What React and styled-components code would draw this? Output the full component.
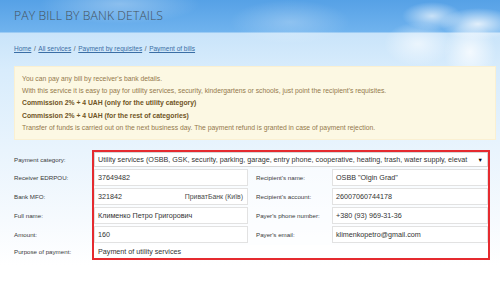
import React from "react";
import styled, { createGlobalStyle } from "styled-components";

const Global = createGlobalStyle`
  html, body {
    margin: 0;
    padding: 0;
    background: #fff;
  }
  body {
    font-family: "Liberation Sans", Arial, sans-serif;
    color: #333;
  }
`;

const Page = styled.div`
  width: 500px;
  height: 300px;
  overflow: hidden;
  background:
    radial-gradient(ellipse 38px 16px at 478px 24px, rgba(255,255,255,0.8), rgba(255,255,255,0) 100%),
    radial-gradient(ellipse 30px 14px at 432px 16px, rgba(255,255,255,0.65), rgba(255,255,255,0) 100%),
    radial-gradient(ellipse 26px 30px at 470px 52px, rgba(255,255,255,0.75), rgba(255,255,255,0) 100%),
    radial-gradient(ellipse 34px 22px at 418px 44px, rgba(255,255,255,0.6), rgba(255,255,255,0) 100%),
    radial-gradient(ellipse 60px 22px at 290px 22px, rgba(255,255,255,0.25), rgba(255,255,255,0) 100%),
    radial-gradient(ellipse 80px 20px at 120px 4px, rgba(255,255,255,0.3), rgba(255,255,255,0) 100%),
    linear-gradient(to bottom,
      #56a1e6 0px, #70b3ee 32px,
      #c9e4fa 33px, #d8ecfc 70px, #e9f4fd 150px, #f6fafe 220px, #ffffff 265px);
`;

const Header = styled.header`
  height: 33px;
  display: flex;
  align-items: center;
  padding-left: 14px;
  box-sizing: border-box;
`;

const Title = styled.h1`
  margin: 0;
  font-family: "Open Sans", sans-serif;
  font-weight: 300;
  font-size: 12.2px;
  color: #45525c;
  letter-spacing: 0.1px;
  line-height: 1;
  padding-bottom: 1px;
`;

const Content = styled.main`
  padding: 12px 4px 0 14px;
`;

const Crumbs = styled.nav`
  font-size: 6.5px;
  line-height: 8px;
  color: #555;
  display: flex;
  gap: 2.6px;

  a {
    color: #3a6ea5;
    text-decoration: underline;
  }
`;

const Alert = styled.div`
  margin-top: 13px;
  background: #fcf8e3;
  border: 1px solid #faf0d2;
  box-sizing: border-box;
  height: 74px;
  padding: 6px 7px;
  color: #8a6d3b;
  font-size: 6.8px;
  line-height: 12.2px;
`;

const Line = styled.div`
  font-weight: ${(p) => (p.$bold ? "bold" : "normal")};
  color: ${(p) => (p.$bold ? "#6f5425" : "#94794c")};
  white-space: nowrap;
`;

const FormWrap = styled.div`
  display: flex;
  margin-top: 10px;
`;

const Labels = styled.div`
  width: 78px;
  padding-top: 2px;
  display: flex;
  flex-direction: column;
  gap: 2px;
`;

const Label = styled.div`
  height: ${(p) => p.$h}px;
  display: flex;
  align-items: center;
  font-size: 6.2px;
  color: #3a3a3a;
  white-space: nowrap;
`;

const RedBox = styled.div`
  width: 398px;
  box-sizing: border-box;
  border: 2px solid #e52a2f;
  background: rgba(255, 255, 255, 0.6);
  display: flex;
  flex-direction: column;
  gap: 2px;
`;

const Select = styled.div`
  height: 15px;
  background: #fff;
  border: 1px solid #d6d6d6;
  box-sizing: border-box;
  display: flex;
  align-items: center;
  padding: 0 4px 0 3px;
  font-size: 7.2px;
  color: #333;
  white-space: nowrap;
`;

const SelectText = styled.span`
  flex: 1;
  min-width: 0;
  overflow: hidden;
`;

const Caret = styled.span`
  flex: none;
  font-size: 5.5px;
  color: #000;
  margin-left: 7px;
`;

const Row = styled.div`
  display: flex;
  height: ${(p) => p.$h || 17}px;
`;

const Field = styled.div`
  width: ${(p) => (p.$w ? p.$w + "px" : "auto")};
  flex: ${(p) => (p.$w ? "none" : 1)};
  height: 100%;
  background: #fff;
  border: 1px solid ${(p) => (p.$plain ? "transparent" : "#e2e2e2")};
  box-sizing: border-box;
  display: flex;
  align-items: center;
  justify-content: space-between;
  padding: 0 4px 0 3px;
  font-size: 7.2px;
  color: #333;
  white-space: nowrap;
`;

const Bank = styled.span`
  color: #4a4a4a;
  font-size: 6.9px;
`;

const Side = styled(Label)`
  width: 84px;
  height: 100%;
  padding-left: 8px;
  box-sizing: border-box;
`;

const rows = [
  ["37649482", "Recipient's name:", 'OSBB "Olgin Grad"'],
  ["321842", "Recipient's account:", "26007060744178", "ПриватБанк (Київ)"],
  ["Клименко Петро Григорович", "Payer's phone number:", "+380 (93) 969-31-36"],
  ["160", "Payer's email:", "klimenkopetro@gmail.com"],
];

export default function App() {
  return (
    <Page>
      <Global />
      <Header>
        <Title>PAY BILL BY BANK DETAILS</Title>
      </Header>
      <Content>
        <Crumbs>
          <a href="#">Home</a>/<a href="#">All services</a>/
          <a href="#">Payment by requisites</a>/<a href="#">Payment of bills</a>
        </Crumbs>
        <Alert>
          <Line>You can pay any bill by receiver's bank details.</Line>
          <Line>
            With this service it is easy to pay for utility services, security,
            kindergartens or schools, just point the recipient's requisites.
          </Line>
          <Line $bold>Commission 2% + 4 UAH (only for the utility category)</Line>
          <Line $bold>Commission 2% + 4 UAH (for the rest of categories)</Line>
          <Line>
            Transfer of funds is carried out on the next business day. The
            payment refund is granted in case of payment rejection.
          </Line>
        </Alert>
        <FormWrap>
          <Labels>
            <Label $h={15}>Payment category:</Label>
            <Label $h={17}>Receiver EDRPOU:</Label>
            <Label $h={17}>Bank MFO:</Label>
            <Label $h={17}>Full name:</Label>
            <Label $h={17}>Amount:</Label>
            <Label $h={13}>Purpose of payment:</Label>
          </Labels>
          <RedBox>
            <Select>
              <SelectText>
                Utility services (OSBB, GSK, security, parking, garage, entry
                phone, cooperative, heating, trash, water supply, elevat
              </SelectText>
              <Caret>▼</Caret>
            </Select>
            {rows.map(([left, label, right, bank]) => (
              <Row key={label}>
                <Field $w={154}>
                  <span>{left}</span>
                  {bank && <Bank>{bank}</Bank>}
                </Field>
                <Side>{label}</Side>
                <Field>{right}</Field>
              </Row>
            ))}
            <Row $h={13}>
              <Field $plain>Payment of utility services</Field>
            </Row>
          </RedBox>
        </FormWrap>
      </Content>
    </Page>
  );
}
